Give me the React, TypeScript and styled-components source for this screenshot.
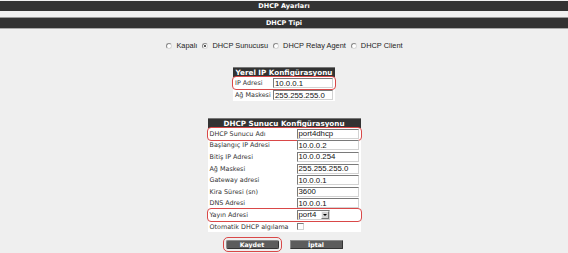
import React from "react";
import styled, { createGlobalStyle, css } from "styled-components";

const GlobalStyle = createGlobalStyle`
  html, body { margin: 0; padding: 0; background: #efefef; overflow: hidden; }
  body { font-family: "DejaVu Sans", Verdana, sans-serif; }
  * { box-sizing: border-box; }
`;

const Page = styled.div`
  width: 568px;
  height: 253px;
  padding-top: 1px;
  background: #efefef;
`;

const TitleBar = styled.div<{ $bordered?: boolean }>`
  height: ${(p) => (p.$bordered ? 12 : 10)}px;
  background: #323232;
  color: #fff;
  font-family: "DejaVu Sans", Verdana, sans-serif;
  font-weight: bold;
  font-size: 6.5px;
  display: flex;
  align-items: center;
  justify-content: center;
  ${(p) =>
    p.$bordered &&
    css`
      margin-top: 6px;
      border-top: 1px solid #9a9a9a;
      border-bottom: 1px solid #a8a8a8;
    `}
`;

const Content = styled.div`
  display: flex;
  flex-direction: column;
  align-items: center;
  padding-top: 12px;
`;

const RadioRow = styled.div`
  display: flex;
  align-items: center;
  height: 9px;
  gap: 4px;
  font-family: "Liberation Sans", Arial, sans-serif;
  font-size: 7.4px;
  color: #222;
`;

const Radio = styled.span<{ $checked?: boolean }>`
  width: 6px;
  height: 6px;
  border-radius: 50%;
  border: 1px solid #8a8a8a;
  border-right-color: #d8d8d8;
  border-bottom-color: #d8d8d8;
  background: #fff;
  display: inline-flex;
  align-items: center;
  justify-content: center;
  margin-left: 1px;
  &::after {
    content: "";
    width: 2px;
    height: 2px;
    border-radius: 50%;
    background: ${(p) => (p.$checked ? "#222" : "transparent")};
  }
`;

const ConfigTable = styled.div<{ $width: number; $label: number; $top: number }>`
  width: ${(p) => p.$width}px;
  margin-top: ${(p) => p.$top}px;
  background: #fff;
  display: grid;
  grid-template-columns: ${(p) => p.$label}px 1fr;
`;

const TableHeader = styled.div`
  grid-column: 1 / -1;
  height: 10px;
  background: #333;
  color: #fff;
  font-weight: bold;
  font-size: 7.2px;
  display: flex;
  align-items: center;
  justify-content: center;
  border-top: 1px solid #777;
  white-space: nowrap;
`;

const Row = styled.div<{ $h: number; $marked?: boolean }>`
  grid-column: 1 / -1;
  display: grid;
  grid-template-columns: subgrid;
  align-items: center;
  height: ${(p) => p.$h}px;
  border-radius: 3px;
  ${(p) =>
    p.$marked &&
    css`
      outline: 1.5px solid #d94848;
      outline-offset: 0px;
    `}
`;

const Label = styled.div`
  font-size: 6.4px;
  color: #333;
  padding-left: 2px;
  white-space: nowrap;
`;

const Input = styled.div<{ $w: number }>`
  width: ${(p) => p.$w}px;
  height: 10px;
  background: #fff;
  border: 1px solid #7a7a7a;
  border-right-color: #d2d2d2;
  border-bottom-color: #d2d2d2;
  font-family: "Liberation Sans", Arial, sans-serif;
  font-size: 7.8px;
  color: #111;
  display: flex;
  align-items: center;
  padding-left: 1px;
  white-space: nowrap;
  overflow: hidden;
`;

const Select = styled.div`
  width: 33px;
  height: 10px;
  border: 1px solid #7a7a7a;
  border-right-color: #d2d2d2;
  border-bottom-color: #d2d2d2;
  background: #fff;
  display: flex;
  align-items: center;
  font-family: "Liberation Sans", Arial, sans-serif;
  font-size: 7.8px;
  color: #111;
  padding-left: 1px;
  justify-content: space-between;
`;

const SelectArrow = styled.span`
  width: 8px;
  height: 8px;
  background: #d4d4d4;
  border: 1px solid #f4f4f4;
  border-right-color: #777;
  border-bottom-color: #777;
  display: inline-flex;
  align-items: center;
  justify-content: center;
  &::after {
    content: "";
    border-left: 2px solid transparent;
    border-right: 2px solid transparent;
    border-top: 2px solid #000;
  }
`;

const Checkbox = styled.span`
  width: 7px;
  height: 7px;
  border: 1px solid #7a7a7a;
  border-right-color: #d2d2d2;
  border-bottom-color: #d2d2d2;
  background: #fff;
  display: block;
`;

const ButtonRow = styled.div`
  display: flex;
  gap: 11px;
  margin-top: 8px;
`;

const Button = styled.div<{ $marked?: boolean }>`
  width: 53px;
  height: 9px;
  background: #5c5c5c;
  border: 1px solid #8a8a8a;
  border-right-color: #333;
  border-bottom-color: #333;
  color: #fff;
  font-weight: bold;
  font-size: 6.2px;
  display: flex;
  align-items: center;
  justify-content: center;
  border-radius: 1px;
  ${(p) =>
    p.$marked &&
    css`
      outline: 1.5px solid #d94848;
      outline-offset: 2px;
      border-radius: 2px;
    `}
`;

const dhcpRows: { label: string; value?: string; marked?: boolean; kind?: "select" | "check" }[] = [
  { label: "DHCP Sunucu Adı", value: "port4dhcp", marked: true },
  { label: "Başlangıç IP Adresi", value: "10.0.0.2" },
  { label: "Bitiş IP Adresi", value: "10.0.0.254" },
  { label: "Ağ Maskesi", value: "255.255.255.0" },
  { label: "Gateway adresi", value: "10.0.0.1" },
  { label: "Kira Süresi (sn)", value: "3600" },
  { label: "DNS Adresi", value: "10.0.0.1" },
  { label: "Yayın Adresi", kind: "select", marked: true },
  { label: "Otomatik DHCP algılama", kind: "check" },
];

export default function App() {
  return (
    <Page>
      <GlobalStyle />
      <TitleBar>DHCP Ayarları</TitleBar>
      <TitleBar $bordered>DHCP Tipi</TitleBar>
      <Content>
        <RadioRow>
          <Radio />
          <span>Kapalı</span>
          <Radio $checked />
          <span>DHCP Sunucusu</span>
          <Radio />
          <span>DHCP Relay Agent</span>
          <Radio />
          <span>DHCP Client</span>
        </RadioRow>

        <ConfigTable $width={102} $label={40} $top={17}>
          <TableHeader>Yerel IP Konfigürasyonu</TableHeader>
          <Row $h={12} $marked>
            <Label>IP Adresi</Label>
            <Input $w={60}>10.0.0.1</Input>
          </Row>
          <Row $h={12}>
            <Label>Ağ Maskesi</Label>
            <Input $w={60}>255.255.255.0</Input>
          </Row>
        </ConfigTable>

        <ConfigTable $width={153} $label={89} $top={17}>
          <TableHeader>DHCP Sunucu Konfigürasyonu</TableHeader>
          {dhcpRows.map((r) => (
            <Row key={r.label} $h={11.6} $marked={r.marked}>
              <Label>{r.label}</Label>
              {r.kind === "select" ? (
                <Select>
                  port4
                  <SelectArrow />
                </Select>
              ) : r.kind === "check" ? (
                <Checkbox />
              ) : (
                <Input $w={62}>{r.value}</Input>
              )}
            </Row>
          ))}
        </ConfigTable>

        <ButtonRow>
          <Button $marked>Kaydet</Button>
          <Button>İptal</Button>
        </ButtonRow>
      </Content>
    </Page>
  );
}
